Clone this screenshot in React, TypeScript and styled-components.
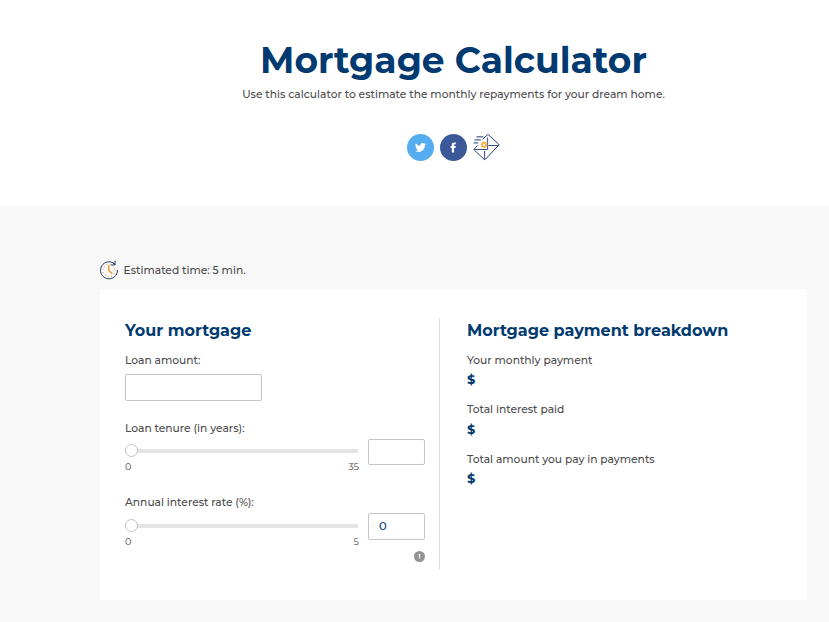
import React, { useState } from "react";
import styled, { createGlobalStyle } from "styled-components";

const navy = "#003a70";
const ink = "#4c4c4c";
const family = `Montserrat, "Open Sans", sans-serif`;

const GlobalStyle = createGlobalStyle`
  * { box-sizing: border-box; }
  body { margin: 0; background: #fff; color: ${ink}; font: 500 10.7px/16px ${family}; }
  h1, h2, p { margin: 0; }
`;

const Page = styled.main`
  height: 622px;
  padding: 0 22px 0 100px;
  overflow: hidden;
  background: linear-gradient(#fff 206px, #f8f8f8 206px);
`;

const Hero = styled.header`
  height: 206px;
  padding-top: 38px;
  display: flex;
  flex-direction: column;
  align-items: center;
`;

const Title = styled.h1`
  color: ${navy};
  font-size: 36px;
  line-height: 44px;
  font-weight: 700;
  white-space: nowrap;
`;

const Text = styled.p`
  height: 16px;
  padding-top: 1px;
  white-space: nowrap;
`;

const Intro = styled(Text)`
  margin-top: 4px;
`;

const ShareList = styled.nav`
  display: flex;
  gap: 6px;
  margin-top: 32px;
`;

const ShareLink = styled.a<{ $color?: string }>`
  width: 27px;
  height: 27px;
  border-radius: 50%;
  display: flex;
  align-items: center;
  justify-content: center;
  background: ${({ $color }) => $color ?? "transparent"};
`;

const Estimate = styled.div`
  height: 83px;
  padding: 54px 0 0;
  display: flex;
  align-items: flex-start;
  gap: 4.6px;
  line-height: 20px;
`;

const Card = styled.section`
  display: flex;
  height: 311px;
  padding: 30px 25px;
  background: #fff;
`;

const FormColumn = styled.div`
  width: 315px;
  padding-right: 14px;
  border-right: 1px solid #dedede;
`;

const ResultColumn = styled.div`
  padding-left: 27px;
`;

const Heading = styled.h2`
  color: ${navy};
  padding-top: 1px;
  font-size: 16px;
  line-height: 22px;
  font-weight: 700;
  white-space: nowrap;
  margin-bottom: 10px;
`;

const Input = styled.input<{ $width: number; $height?: number }>`
  display: block;
  width: ${({ $width }) => $width}px;
  height: ${({ $height = 27 }) => $height}px;
  flex-shrink: 0;
  padding: 0 10px 2px;
  border: 1px solid #c5c5c5;
  border-radius: 2px;
  background: #fff;
  color: ${navy};
  font: 500 11.5px ${family};
  outline: none;
`;

const AmountField = styled.div`
  margin-bottom: 19px;
  ${Input} { margin-top: 6px; }
`;

const SliderRow = styled.div`
  display: flex;
  justify-content: space-between;
  margin-top: 3px;
`;

const SliderBox = styled.div`
  width: 234px;
  padding-top: 5px;
`;

const SliderField = styled.div`
  height: 74px;
  & + & ${SliderBox} { padding-top: 6px; }
`;

const Slider = styled.input`
  display: block;
  appearance: none;
  width: 233px;
  height: 14px;
  margin: 0;
  background: linear-gradient(#e4e4e4, #e4e4e4) center / 100% 4px no-repeat;
  &::-webkit-slider-thumb {
    appearance: none;
    width: 13px;
    height: 13px;
    margin-top: -1px;
    border: 1px solid #c4c4c4;
    border-radius: 50%;
    background: #fff;
  }
`;

const Scale = styled.div`
  display: flex;
  justify-content: space-between;
  margin-top: 1px;
  font-size: 9.5px;
  font-weight: 400;
  line-height: 16px;
`;

const Info = styled.div`
  display: flex;
  justify-content: flex-end;
  margin-top: -17px;
`;

const Result = styled.div`
  height: 49.4px;
`;

const Value = styled.p`
  margin-top: 3.4px;
  color: ${navy};
  font-size: 13px;
  line-height: 17px;
  font-weight: 700;
`;

const TwitterIcon = () => (
  <svg width="11" height="11" viewBox="0 0 24 24" fill="#fff">
    <path d="M24 4.6a10 10 0 0 1-2.8.8 5 5 0 0 0 2.1-2.7 10 10 0 0 1-3.1 1.2 4.9 4.9 0 0 0-8.4 4.5A14 14 0 0 1 1.7 3.1a4.9 4.9 0 0 0 1.5 6.6 5 5 0 0 1-2.2-.6 4.9 4.9 0 0 0 3.9 4.9 5 5 0 0 1-2.2.1 4.9 4.9 0 0 0 4.6 3.4A10 10 0 0 1 0 19.5a14 14 0 0 0 21.5-12.4A10 10 0 0 0 24 4.6z" />
  </svg>
);

const FacebookIcon = () => (
  <svg width="7" height="11" viewBox="0 0 7 11" fill="#fff">
    <path d="M1.8 10.4V6H.6V4.1h1.2V2.9C1.8 1.2 2.8.5 4.3.5l1.5.1v1.7H5c-.7 0-.9.3-.9.8v1h1.7L5.5 6H4.1v4.4z" />
  </svg>
);

const MailIcon = () => (
  <svg width="27" height="27" viewBox="0 0 27 27" fill="none" stroke="#1f3c70" strokeWidth="1">
    <path d="M9.6 5.4 14.4.9q.6-.5 1.2 0l10 9.2q.6.6 0 1.2L12.4 25.3q-.7.7-1.4 0L1.3 16q-.5-.5 0-1.1L4.6 11.5" />
    <path d="M11.6 17v8M14.6 3.5v10.2M15.4 11.5h10M1.4 15.5h13.2v-2" strokeWidth=".9" />
    <path d="M3.4 2.9h7M1.5 5.9h6.3M.7 8.9h4.6" />
    <circle cx="11" cy="10.8" r="2" stroke="#f6a936" strokeWidth="1.6" />
    <circle cx="11" cy="10.8" r="3.1" stroke="#f8b54c" strokeWidth=".8" strokeDasharray="1.4 1.03" />
  </svg>
);

const ClockIcon = () => (
  <svg width="19" height="20" viewBox="0 0 19 20" fill="none">
    <path d="M15.3 4.6A8.5 8.5 0 1 0 17.5 10" stroke="#263e69" />
    <path d="M15 .7v4.2h-4M15 4.9 13.2 3" stroke="#263e69" />
    <path d="M8.8 5.2v5.3l3.5 3.1" stroke="#f49a35" strokeWidth="1.5" />
    <circle cx="9" cy="10.5" r="6.1" stroke="#f5a95a" strokeWidth="1.2" strokeDasharray="1 2.19" />
  </svg>
);

const InfoIcon = () => (
  <svg width="11" height="11" viewBox="0 0 11 11">
    <circle cx="5.5" cy="5.5" r="5.5" fill="#929292" />
    <path d="M4.7 3h1.5v3.7H5.1V4h-.4zM5.1 7.3h1.1v.8H5.1z" fill="#fff" />
  </svg>
);

function RangeField({ label, max, initial, inputHeight }: { label: string; max: number; initial: string; inputHeight?: number }) {
  const [value, setValue] = useState(initial);
  return (
    <SliderField>
      <Text>{label}</Text>
      <SliderRow>
        <SliderBox>
          <Slider type="range" min={0} max={max} aria-label={label} value={Number(value) || 0} onChange={(e) => setValue(e.target.value)} />
          <Scale><span>0</span><span>{max}</span></Scale>
        </SliderBox>
        <Input $width={57} $height={inputHeight} aria-label={label} value={value} onChange={(e) => setValue(e.target.value)} />
      </SliderRow>
    </SliderField>
  );
}

const results = ["Your monthly payment", "Total interest paid", "Total amount you pay in payments"];

export default function App() {
  return (
    <Page>
      <GlobalStyle />
      <Hero>
        <Title>Mortgage Calculator</Title>
        <Intro>Use this calculator to estimate the monthly repayments for your dream home.</Intro>
        <ShareList>
          <ShareLink $color="#55acee" aria-label="Twitter"><TwitterIcon /></ShareLink>
          <ShareLink $color="#3b5998" aria-label="Facebook"><FacebookIcon /></ShareLink>
          <ShareLink aria-label="Email"><MailIcon /></ShareLink>
        </ShareList>
      </Hero>
      <Estimate>
        <ClockIcon />
        <Text>Estimated time: 5 min.</Text>
      </Estimate>
      <Card>
        <FormColumn>
          <Heading>Your mortgage</Heading>
          <AmountField>
            <Text>Loan amount:</Text>
            <Input $width={137} aria-label="Loan amount" />
          </AmountField>
          <RangeField label="Loan tenure (in years):" max={35} initial="" inputHeight={26} />
          <RangeField label="Annual interest rate (%):" max={5} initial="0" />
          <Info><InfoIcon /></Info>
        </FormColumn>
        <ResultColumn>
          <Heading>Mortgage payment breakdown</Heading>
          {results.map((label) => (
            <Result key={label}>
              <Text>{label}</Text>
              <Value>$</Value>
            </Result>
          ))}
        </ResultColumn>
      </Card>
    </Page>
  );
}
